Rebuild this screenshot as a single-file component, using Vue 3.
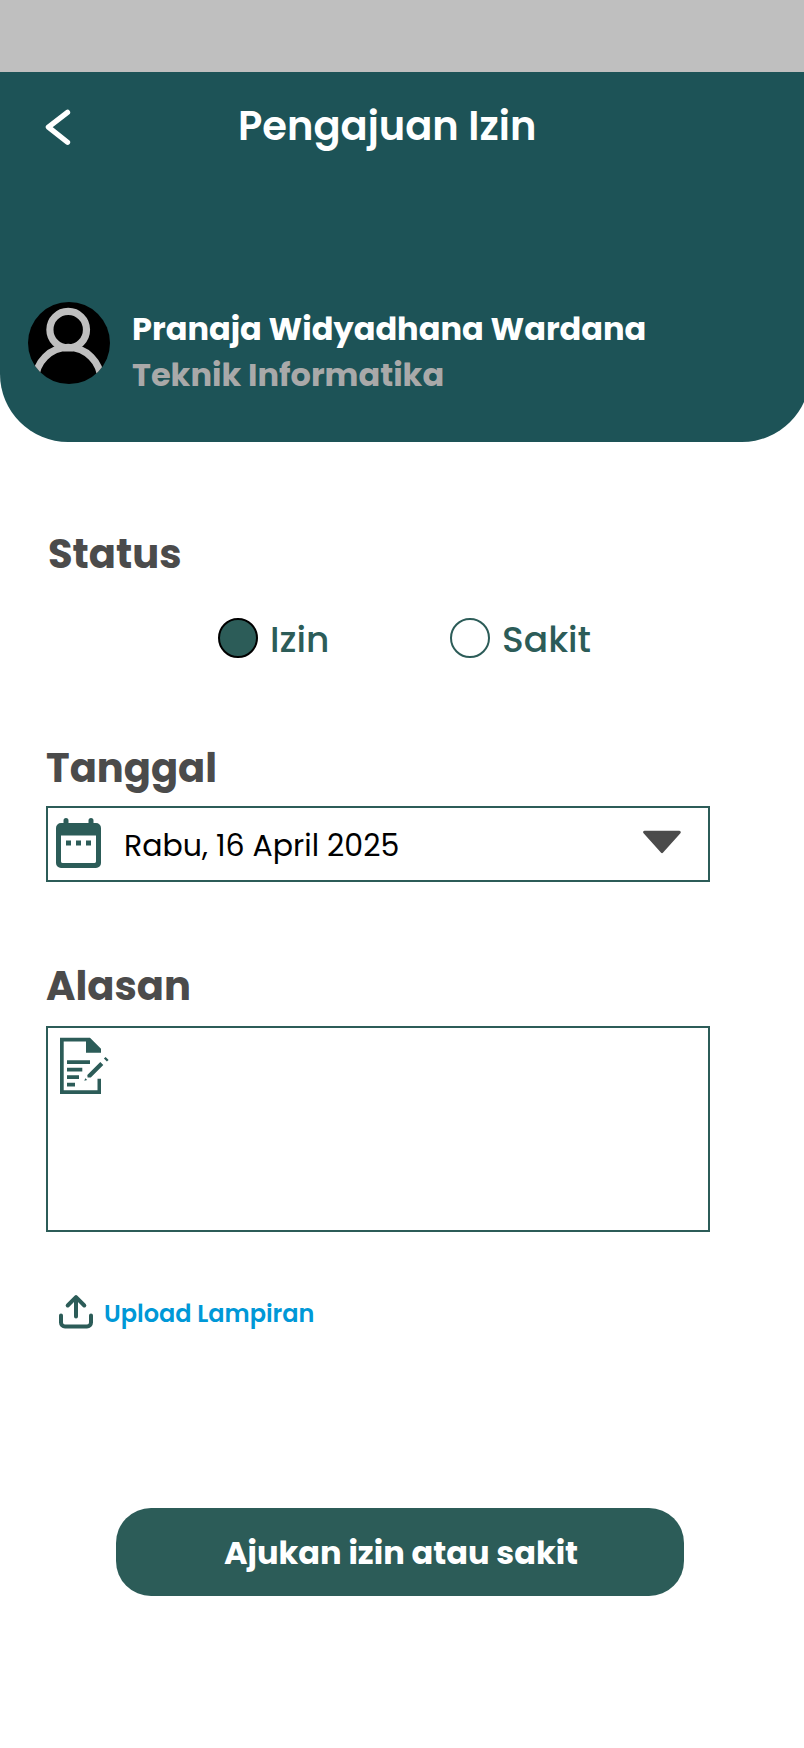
<script setup>
import { ref } from 'vue'

const status = ref('izin')
const options = [
  { id: 'izin', label: 'Izin' },
  { id: 'sakit', label: 'Sakit' },
]
</script>

<template>
  <main class="screen">
    <div class="statusbar"></div>

    <header class="hero">
      <div class="topbar">
        <svg class="back" viewBox="0 0 30 40" fill="none" stroke="#fff" stroke-width="5.3" stroke-linecap="round" stroke-linejoin="round">
          <path d="M24.5 5.4 5.4 20.100 24.500 35.300" />
        </svg>
        <h1 class="title">Pengajuan Izin</h1>
      </div>
      <div class="profile">
        <svg class="avatar" viewBox="0 0 82 82">
          <defs>
            <clipPath id="avatar-clip"><circle cx="41" cy="41" r="41" /></clipPath>
          </defs>
          <circle cx="41" cy="41" r="41" fill="#000" />
          <g clip-path="url(#avatar-clip)" fill="none" stroke="#bfbfbf" stroke-width="7.2">
            <circle cx="40.2" cy="27.7" r="18.3" />
            <circle cx="40.2" cy="78" r="32.6" />
          </g>
        </svg>
        <div class="who">
          <div class="name">Pranaja Widyadhana Wardana</div>
          <div class="major">Teknik Informatika</div>
        </div>
      </div>
    </header>

    <section class="form">
      <h2 class="label label-status">Status</h2>
      <div class="radios">
        <div v-for="o in options" :key="o.id" class="radio" :class="{ on: status === o.id }" @click="status = o.id">
          <span class="dot"></span>
          <span class="radio-text">{{ o.label }}</span>
        </div>
      </div>

      <h2 class="label label-date">Tanggal</h2>
      <div class="date">
        <svg class="calendar" viewBox="0 0 45 50" fill="#2c5c58">
          <path fill-rule="evenodd" d="M5 5h2.5V2.500a2.500 2.500 0 0 1 5 0V5h20V2.500a2.500 2.500 0 0 1 5 0V5H40a5 5 0 0 1 5 5v35a5 5 0 0 1-5 5H5a5 5 0 0 1-5-5V10a5 5 0 0 1 5-5zM5 17.500V43.500A1.700 1.700 0 0 0 6.700 45H38.300A1.700 1.700 0 0 0 40 43.500V17.500z" />
          <path d="M10 22.500h5v5h-5zM20 22.500h5v5h-5zM30 22.500h5v5h-5z" />
        </svg>
        <span class="date-text">Rabu, 16 April 2025</span>
        <svg class="caret" viewBox="0 0 38 24" fill="#4b4b4b" stroke="#4b4b4b" stroke-width="3" stroke-linejoin="round">
          <path d="M1.700 2.200H36.300L19 21.600z" />
        </svg>
      </div>

      <h2 class="label label-reason">Alasan</h2>
      <div class="reason">
        <svg class="note" viewBox="0 0 50 58" fill="#2c5c58">
          <path d="M0 .7H30L41 11.700V15.700H26V4.400H3.700V53.200H37.500V41.800H41V57H0z" />
          <path d="M7 23.200H30v3.700H7zM7 30.700H22.300v3.700H7zM7 38.200H19v3.700H7zM7 45.700H15v3.700H7z" />
          <path d="M27.300 38 40.300 25 43.300 28 30.800 40.400 27.600 40.600zM43.900 21.600 45.600 19.900 48.600 22.900 46.900 24.600zM24.300 43.700 25.300 41.200 27.200 43z" />
        </svg>
      </div>

      <div class="upload">
        <svg class="upload-icon" viewBox="0 0 34 36" fill="none" stroke="#2c5c58" stroke-width="4" stroke-linecap="round" stroke-linejoin="round">
          <path d="M17 22.500V3.200M8.700 11.500 17 3.200l8.300 8.300M2 21.500V28.500a4 4 0 0 0 4 4H28a4 4 0 0 0 4-4V21.500" />
        </svg>
        <span class="upload-text">Upload Lampiran</span>
      </div>

      <button class="submit" type="button">Ajukan izin atau sakit</button>
    </section>
  </main>
</template>

<style>
body {
  margin: 0;
  background: #fff;
}
</style>

<style scoped>
.screen {
  width: 804px;
  height: 1748px;
  overflow: hidden;
  background: #fff;
  font-family: Poppins, Inter, "Open Sans", sans-serif;
  white-space: nowrap;
}
svg {
  display: block;
  flex: none;
}
h1, h2 {
  margin: 0;
}
.statusbar {
  height: 72px;
  background: #bfbfbf;
}
.hero {
  box-sizing: border-box;
  width: 810px;
  height: 370px;
  padding-top: 34px;
  border-radius: 0 0 68px 68px;
  background: #1d5357;
}
.topbar {
  display: flex;
  align-items: center;
  height: 40px;
  padding-left: 43px;
}
.back {
  width: 30px;
  height: 40px;
  margin-top: 2px;
}
.title {
  margin-left: 165px;
  color: #fff;
  font-size: 40px;
  font-weight: 600;
  line-height: 40px;
}
.profile {
  display: flex;
  margin-top: 156px;
  padding-left: 28px;
}
.avatar {
  width: 82px;
  height: 82px;
}
.who {
  margin: 4px 0 0 22px;
  font-size: 32px;
  font-weight: 700;
  line-height: 46px;
}
.name {
  color: #fff;
}
.major {
  color: #a9a9a9;
}
.form {
  padding: 87px 0 0 46px;
}
.label {
  color: #4b4b4b;
  font-size: 40px;
  font-weight: 700;
  line-height: 50px;
}
.label-status {
  padding-left: 2px;
}
.radios {
  display: flex;
  margin-top: 39px;
  padding-left: 172px;
}
.radio {
  display: flex;
  width: 232px;
  height: 40px;
  color: #2c5c58;
  font-size: 36px;
  font-weight: 500;
  line-height: 43px;
}
.dot {
  box-sizing: border-box;
  width: 40px;
  height: 40px;
  border: 2px solid #2c5c58;
  border-radius: 50%;
}
.on .dot {
  border-color: #000;
  background: #2c5c58;
}
.radio-text {
  margin-left: 12px;
}
.label-date {
  margin-top: 85px;
}
.date {
  box-sizing: border-box;
  display: flex;
  width: 664px;
  height: 76px;
  margin-top: 13px;
  padding: 10px 0 0 8px;
  border: 2px solid #2c5c58;
}
.calendar {
  width: 45px;
  height: 50px;
}
.date-text {
  width: 519px;
  margin-left: 23px;
  color: #000;
  font-size: 30px;
  line-height: 56px;
}
.caret {
  width: 38px;
  height: 24px;
  margin-top: 12px;
}
.label-reason {
  margin-top: 79px;
}
.reason {
  box-sizing: border-box;
  width: 664px;
  height: 206px;
  margin-top: 15px;
  padding: 9px 0 0 12px;
  border: 2px solid #2c5c58;
}
.note {
  width: 50px;
  height: 58px;
}
.upload {
  display: flex;
  align-items: center;
  height: 36px;
  margin-top: 62px;
  padding-left: 13px;
}
.upload-icon {
  width: 34px;
  height: 36px;
}
.upload-text {
  margin: 4px 0 0 11px;
  color: #0098d7;
  font-size: 24px;
  font-weight: 600;
  line-height: 30px;
}
.submit {
  display: block;
  width: 568px;
  height: 88px;
  margin: 178px 0 0 70px;
  padding: 2px 0 0 108px;
  border: 0;
  border-radius: 35px;
  background: #2c5c58;
  color: #fff;
  font-family: inherit;
  font-size: 32px;
  font-weight: 700;
  text-align: left;
}
</style>
